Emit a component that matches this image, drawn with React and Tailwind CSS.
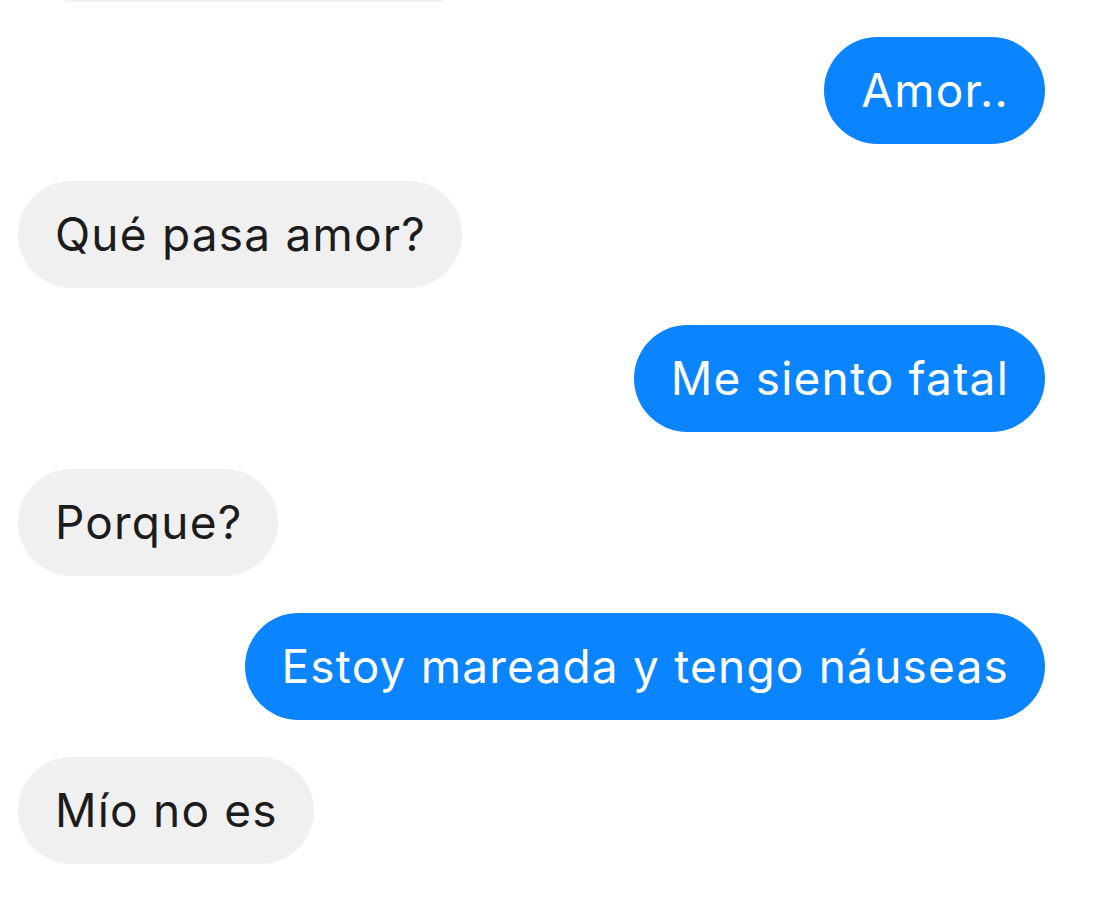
import React from "react";

const messages = [
  { me: true, text: "Amor.." },
  { me: false, text: "Qué pasa amor?" },
  { me: true, text: "Me siento fatal" },
  { me: false, text: "Porque?" },
  { me: true, text: "Estoy mareada y tengo náuseas" },
  { me: false, text: "Mío no es" },
];

export default function App() {
  return (
    <div
      className="w-[1106px] h-[898px] bg-white overflow-hidden flex flex-col pl-[18px] pr-[61px]"
      style={{ fontFamily: "Inter, 'Noto Sans', sans-serif" }}
    >
      <div className="h-[2px] ml-[46px] w-[379px] bg-[#f0f0f0] rounded-b-full shrink-0" />
      <div className="flex flex-col gap-[37px] mt-[35px]">
        {messages.map((m, i) => (
          <div key={i} className={m.me ? "flex justify-end" : "flex justify-start"}>
            <div
              className={
                "h-[107px] pl-[37px] pr-[36px] flex items-center rounded-full text-[46px] tracking-[1.2px] whitespace-nowrap " +
                (m.me ? "bg-[#0a84ff] text-white" : "bg-[#f0f0f0] text-[#1c1c1c]")
              }
            >
              {m.text}
            </div>
          </div>
        ))}
      </div>
    </div>
  );
}
